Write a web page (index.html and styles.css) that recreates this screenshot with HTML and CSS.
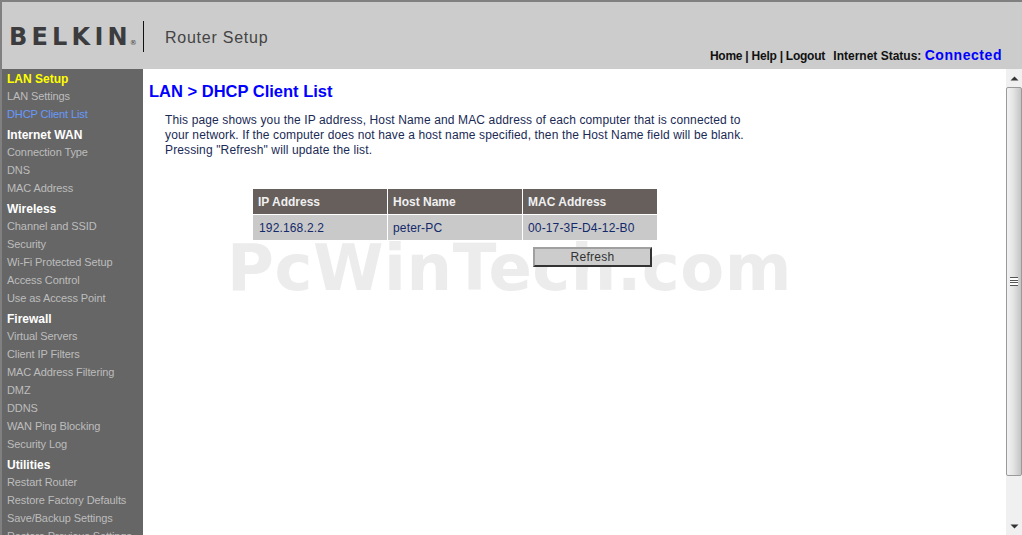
FILE: index.html
```html
<!DOCTYPE html>
<html lang="en">
<head>
    <meta charset="UTF-8">
    <meta name="viewport" content="width=device-width, initial-scale=1.0">
    <title>Router Setup</title>
    <link rel="stylesheet" href="styles.css">
</head>
<body>
    <div class="header">
        <div class="brand">
            <div class="logo">BELKIN<span class="reg">®</span></div>
            <div class="product">Router Setup</div>
        </div>
        <div class="top-links">
            <span class="links"><a href="#">Home</a> | <a href="#">Help</a> | <a href="#">Logout</a></span>
            <span class="status-label">Internet Status:</span>
            <span class="status-value">Connected</span>
        </div>
    </div>
    <div class="container">
        <div class="sidebar">
            <div class="nav-head current">LAN Setup</div>
            <a class="nav-item" href="#">LAN Settings</a>
            <a class="nav-item active" href="#">DHCP Client List</a>
            <div class="nav-head">Internet WAN</div>
            <a class="nav-item" href="#">Connection Type</a>
            <a class="nav-item" href="#">DNS</a>
            <a class="nav-item" href="#">MAC Address</a>
            <div class="nav-head">Wireless</div>
            <a class="nav-item" href="#">Channel and SSID</a>
            <a class="nav-item" href="#">Security</a>
            <a class="nav-item" href="#">Wi-Fi Protected Setup</a>
            <a class="nav-item" href="#">Access Control</a>
            <a class="nav-item" href="#">Use as Access Point</a>
            <div class="nav-head">Firewall</div>
            <a class="nav-item" href="#">Virtual Servers</a>
            <a class="nav-item" href="#">Client IP Filters</a>
            <a class="nav-item" href="#">MAC Address Filtering</a>
            <a class="nav-item" href="#">DMZ</a>
            <a class="nav-item" href="#">DDNS</a>
            <a class="nav-item" href="#">WAN Ping Blocking</a>
            <a class="nav-item" href="#">Security Log</a>
            <div class="nav-head">Utilities</div>
            <a class="nav-item" href="#">Restart Router</a>
            <a class="nav-item" href="#">Restore Factory Defaults</a>
            <a class="nav-item" href="#">Save/Backup Settings</a>
            <a class="nav-item" href="#">Restore Previous Settings</a>
        </div>
        <div class="main">
            <h1>LAN &gt; DHCP Client List</h1>
            <p class="intro">This page shows you the IP address, Host Name and MAC address of each computer that is connected to your network. If the computer does not have a host name specified, then the Host Name field will be blank. Pressing "Refresh" will update the list.</p>
            <div class="client-table">
                <div class="th">IP Address</div>
                <div class="th">Host Name</div>
                <div class="th">MAC Address</div>
                <div class="td first">192.168.2.2</div>
                <div class="td">peter-PC</div>
                <div class="td">00-17-3F-D4-12-B0</div>
            </div>
            <div class="actions">
                <button class="refresh">Refresh</button>
            </div>
        </div>
        <div class="scrollbar">
            <div class="scroll-btn">
                <svg width="9" height="5" viewBox="0 0 9 5"><path d="M4.5 0.5 L8.5 4.5 L0.5 4.5 Z" fill="#333"/></svg>
            </div>
            <div class="thumb">
                <div class="grip"></div>
            </div>
            <div class="scroll-rest"></div>
            <div class="scroll-btn">
                <svg width="9" height="5" viewBox="0 0 9 5"><path d="M0.5 0.5 L8.5 0.5 L4.5 4.5 Z" fill="#333"/></svg>
            </div>
        </div>
    </div>
    <div class="watermark">PcWinTech.com</div>
</body>
</html>
```

FILE: styles.css
```css
html, body {
    height: 100%;
}
body {
    font-family: "Liberation Sans", Arial, sans-serif;
    font-size: 12px;
    margin: 0;
    padding: 0;
    overflow: hidden;
    box-sizing: border-box;
    border-top: 2px solid #808080;
    border-left: 2px solid #808080;
    display: flex;
    flex-direction: column;
    position: relative;
    background-color: #fff;
}
a {
    text-decoration: none;
    color: inherit;
}
.header {
    height: 67px;
    flex: none;
    background-color: #cccccc;
    display: flex;
    justify-content: space-between;
}
.brand {
    display: flex;
    align-items: center;
    height: 31px;
    margin-top: 19px;
}
.logo {
    width: 142px;
    height: 31px;
    padding-left: 7px;
    box-sizing: border-box;
    border-right: 1px solid #111;
    margin-right: 21px;
    font-family: "DejaVu Sans", sans-serif;
    font-size: 24px;
    line-height: 33px;
    font-weight: bold;
    letter-spacing: 4.2px;
    color: #3c3c3e;
    white-space: nowrap;
}
.reg {
    font-size: 7px;
    letter-spacing: 0;
    font-weight: normal;
    margin-left: -2px;
}
.product {
    font-size: 16px;
    line-height: 33px;
    padding-top: 2px;
    letter-spacing: 0.75px;
    color: #444;
}
.top-links {
    align-self: flex-end;
    padding: 0 20px 5px 0;
    font-weight: bold;
    color: #111;
    line-height: 16px;
}
.links {
    letter-spacing: -0.25px;
}
.status-label {
    margin-left: 5px;
}
.status-value {
    font-size: 14px;
    letter-spacing: 0.55px;
    color: #0000ff;
}
.container {
    flex: 1;
    min-height: 0;
    display: flex;
}
.sidebar {
    width: 141px;
    flex: none;
    background-color: #666666;
    padding-left: 5px;
    box-sizing: border-box;
    overflow: hidden;
}
.nav-head {
    height: 18px;
    padding-top: 2px;
    line-height: 20px;
    font-size: 12px;
    font-weight: bold;
    color: #fff;
}
.nav-head.current {
    padding-top: 0;
    color: #ffff00;
}
.nav-item {
    display: block;
    height: 18px;
    line-height: 18px;
    font-size: 11px;
    letter-spacing: -0.1px;
    color: #bdbdbd;
    white-space: nowrap;
}
.nav-item.active {
    color: #6699ff;
}
.main {
    flex: 1;
    min-width: 0;
}
h1 {
    margin: 12px 0 0 6px;
    font-size: 16.5px;
    line-height: 20px;
    color: #0000ff;
}
.intro {
    width: 584px;
    margin: 12px 0 0 22px;
    line-height: 15px;
    letter-spacing: 0.13px;
    color: #1a2a55;
}
.client-table {
    display: grid;
    grid-template-columns: repeat(3, 134px);
    gap: 1px;
    margin: 31px 0 0 110px;
}
.th {
    height: 25px;
    line-height: 27px;
    padding-left: 5px;
    background-color: #665f5c;
    font-weight: bold;
    color: #f0f0f0;
}
.td {
    height: 25px;
    line-height: 26px;
    padding-left: 5px;
    background-color: #c9c9c9;
    letter-spacing: 0.15px;
    color: #14296b;
}
.td.first {
    padding-left: 6px;
}
.actions {
    margin: 7px 0 0 390px;
}
.refresh {
    display: block;
    position: relative;
    z-index: 1;
    width: 119px;
    height: 20px;
    padding: 0;
    border: 2px solid;
    border-color: #a0a0a0 #333 #333 #a0a0a0;
    background-color: #cccccc;
    font-family: "Liberation Sans", Arial, sans-serif;
    font-size: 12px;
    letter-spacing: 0.25px;
    color: #333;
}
.scrollbar {
    width: 16px;
    flex: none;
    background-color: #f0f0f0;
    display: flex;
    flex-direction: column;
}
.scroll-btn {
    height: 18px;
    flex: none;
    display: flex;
    align-items: center;
    justify-content: center;
}
.thumb {
    height: 389px;
    flex: none;
    box-sizing: border-box;
    border: 1px solid #9a9a9a;
    border-radius: 2px;
    background: linear-gradient(to right, #f2f2f2, #e4e4e4 45%, #c4c4c4);
    display: flex;
    align-items: center;
    justify-content: center;
}
.grip {
    width: 8px;
    height: 7px;
    border-top: 1px solid #555;
    border-bottom: 1px solid #555;
    background: linear-gradient(#fff 0 2px, #555 2px 3px, #fff 3px 4px, #555 4px 5px, #fff 5px);
}
.scroll-rest {
    flex: 1;
}
.watermark {
    position: absolute;
    left: 225px;
    top: 239px;
    font-family: "DejaVu Sans", sans-serif;
    font-size: 64px;
    line-height: 54px;
    font-weight: bold;
    letter-spacing: 0.55px;
    color: #ececec;
    white-space: nowrap;
}
```
